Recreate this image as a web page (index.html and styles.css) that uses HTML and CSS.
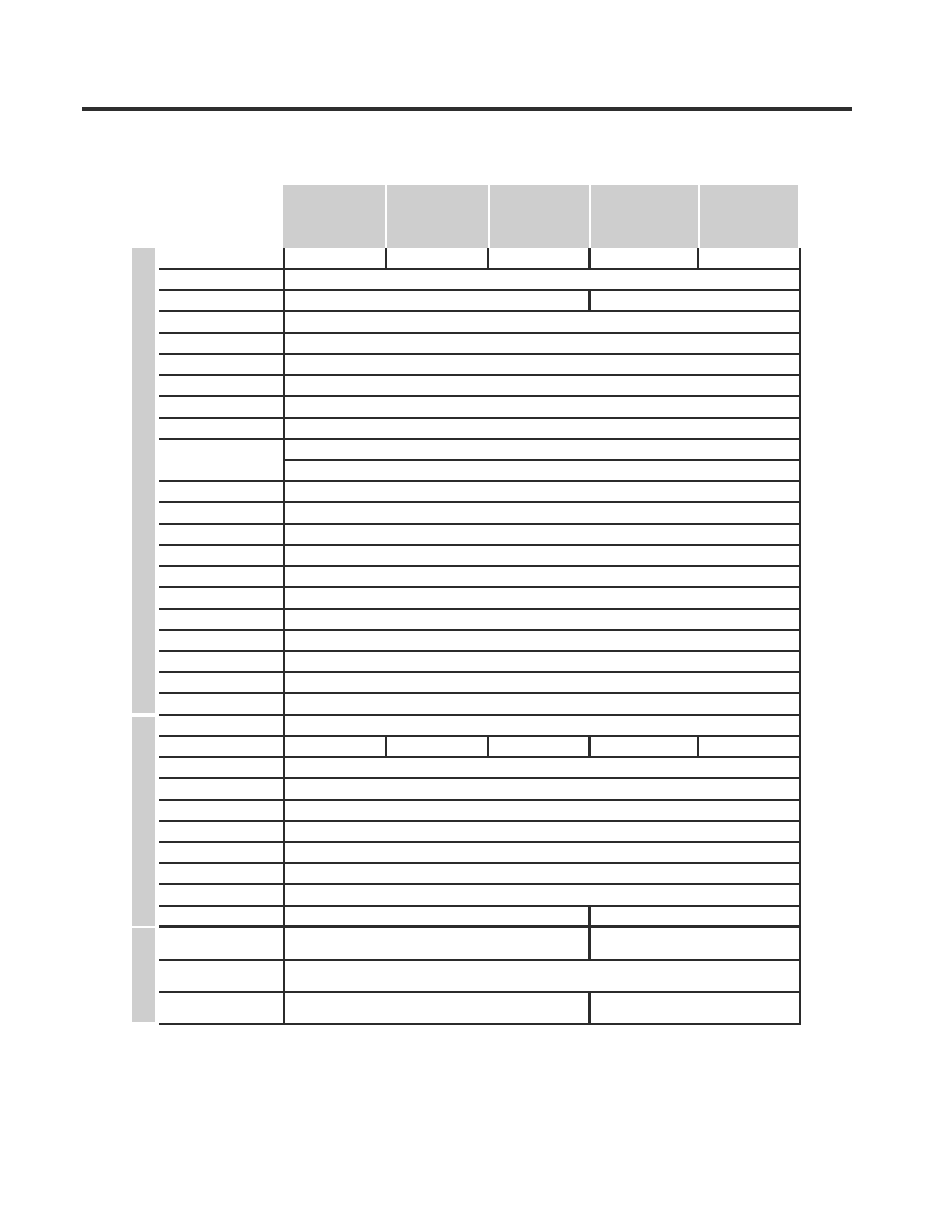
FILE: index.html
```
<!DOCTYPE html>
<html>
<head>
<meta charset="utf-8">
<title>Table</title>
<link rel="stylesheet" href="styles.css">
</head>
<body>
<div class="page">
  <div class="rule"></div>
  <div class="sheet">
    <div class="head">
      <div class="hc w1"></div>
      <div class="hc w2"></div>
      <div class="hc w3"></div>
      <div class="hc w4"></div>
      <div class="hc w5"></div>
    </div>

    <div class="section s1">
      <div class="band"></div>
      <div class="rows">
        <div class="row first"><div class="lab"></div><div class="cell split5"><div class="c"></div><div class="c"></div><div class="c"></div><div class="c"></div><div class="c"></div></div></div>
        <div class="row"><div class="lab"></div><div class="cell"></div></div>
        <div class="row"><div class="lab"></div><div class="cell split2"><div class="c"></div><div class="c"></div></div></div>
        <div class="row"><div class="lab"></div><div class="cell"></div></div>
        <div class="row"><div class="lab"></div><div class="cell"></div></div>
        <div class="row"><div class="lab"></div><div class="cell"></div></div>
        <div class="row"><div class="lab"></div><div class="cell"></div></div>
        <div class="row"><div class="lab"></div><div class="cell"></div></div>
        <div class="row"><div class="lab"></div><div class="cell"></div></div>
        <div class="row dbl"><div class="lab"></div><div class="cell stack"><div class="sub"></div><div class="sub"></div></div></div>
        <div class="row"><div class="lab"></div><div class="cell"></div></div>
        <div class="row"><div class="lab"></div><div class="cell"></div></div>
        <div class="row"><div class="lab"></div><div class="cell"></div></div>
        <div class="row"><div class="lab"></div><div class="cell"></div></div>
        <div class="row"><div class="lab"></div><div class="cell"></div></div>
        <div class="row"><div class="lab"></div><div class="cell"></div></div>
        <div class="row"><div class="lab"></div><div class="cell"></div></div>
        <div class="row"><div class="lab"></div><div class="cell"></div></div>
        <div class="row"><div class="lab"></div><div class="cell"></div></div>
        <div class="row"><div class="lab"></div><div class="cell"></div></div>
        <div class="row"><div class="lab"></div><div class="cell"></div></div>
      </div>
    </div>

    <div class="section s2">
      <div class="band"></div>
      <div class="rows">
        <div class="row"><div class="lab"></div><div class="cell"></div></div>
        <div class="row"><div class="lab"></div><div class="cell split5"><div class="c"></div><div class="c"></div><div class="c"></div><div class="c"></div><div class="c"></div></div></div>
        <div class="row"><div class="lab"></div><div class="cell"></div></div>
        <div class="row"><div class="lab"></div><div class="cell"></div></div>
        <div class="row"><div class="lab"></div><div class="cell"></div></div>
        <div class="row"><div class="lab"></div><div class="cell"></div></div>
        <div class="row"><div class="lab"></div><div class="cell"></div></div>
        <div class="row"><div class="lab"></div><div class="cell"></div></div>
        <div class="row"><div class="lab"></div><div class="cell"></div></div>
        <div class="row thick"><div class="lab"></div><div class="cell split2"><div class="c"></div><div class="c"></div></div></div>
      </div>
    </div>

    <div class="section s3">
      <div class="band"></div>
      <div class="rows">
        <div class="row"><div class="lab"></div><div class="cell split2"><div class="c"></div><div class="c"></div></div></div>
        <div class="row"><div class="lab"></div><div class="cell"></div></div>
        <div class="row"><div class="lab"></div><div class="cell split2"><div class="c"></div><div class="c"></div></div></div>
      </div>
    </div>
  </div>
</div>
</body>
</html>
```

FILE: styles.css
```
* { box-sizing: border-box; }
html, body { margin: 0; background: #ffffff; }
body { font-family: "Liberation Sans", Arial, sans-serif; }

.page { width: 935px; height: 1210px; padding-top: 107px; }
.rule { margin-left: 82px; width: 770px; height: 4px; background: #2e2e2e; }

.sheet { margin: 74px 0 0 132px; width: 669px; }

.head { display: flex; height: 63px; padding-left: 151px; }
.hc { background: #cecece; margin-right: 2px; }
.hc.w1 { width: 102px; }
.hc.w2 { width: 101px; }
.hc.w3 { width: 99px; }
.hc.w4 { width: 107px; }
.hc.w5 { width: 98px; }

.section { display: grid; grid-template-columns: 23px 642px; column-gap: 4px; }
.band { background: #cecece; }
.s1 .band { margin-bottom: 2.6px; }
.s2 .band { margin: 1.4px 0 2.5px; }
.s3 .band { margin-bottom: 3px; }

.row {
  display: grid;
  grid-template-columns: 124px 518px;
  border-bottom: 2px solid #2b2b2b;
}
.s1 .row { height: 21.22px; }
.s1 .row.first { height: 22px; }
.s1 .row.dbl { height: 42.44px; }
.s2 .row { height: 21.24px; }
.s2 .row.thick { height: 21.74px; border-bottom-width: 3px; }
.s3 .row { height: 32.17px; }

.cell {
  display: flex;
  border-left: 2px solid #2b2b2b;
  border-right: 2px solid #2b2b2b;
}

.split5 .c:nth-child(1) { width: 100px; }
.split5 .c:nth-child(2) { width: 102px; border-left: 2px solid #2b2b2b; }
.split5 .c:nth-child(3) { width: 101px; border-left: 2px solid #2b2b2b; }
.split5 .c:nth-child(4) { width: 109px; border-left: 3px solid #2b2b2b; }
.split5 .c:nth-child(5) { flex: 1; border-left: 2px solid #2b2b2b; }

.split2 .c:first-child { width: 303px; }
.split2 .c:last-child { flex: 1; border-left: 3px solid #2b2b2b; }

.stack { flex-direction: column; }
.stack .sub { flex: 1; }
.stack .sub:first-child { border-bottom: 2px solid #2b2b2b; }
```
